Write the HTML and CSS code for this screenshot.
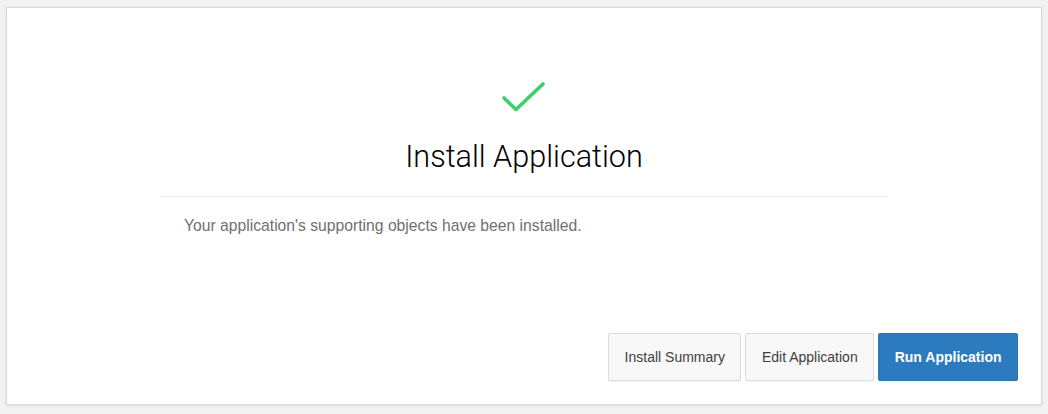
FILE: index.html
```html
<!DOCTYPE html>
<html lang="en">
<head>
<meta charset="utf-8">
<title>Install Application</title>
<link rel="stylesheet" href="styles.css">
</head>
<body>
<div class="dialog">
  <div class="content">
    <div class="head">
      <svg class="check" width="48" height="34" viewBox="0 0 48 34" aria-hidden="true">
        <polyline points="4,17 16,28.5 43,3" fill="none" stroke="#3dd06a" stroke-width="3.6" stroke-linecap="round" stroke-linejoin="round"/>
      </svg>
      <h1 class="title">Install Application</h1>
    </div>
    <p class="message">Your application's supporting objects have been installed.</p>
  </div>
  <div class="actions">
    <button class="btn">Install Summary</button>
    <button class="btn">Edit Application</button>
    <button class="btn btn-primary">Run Application</button>
  </div>
</div>
</body>
</html>
```

FILE: styles.css
```css
html, body {
  margin: 0;
  padding: 0;
}
body {
  background: #f2f2f2;
  padding: 7px 6px 9px 6px;
  font-family: "Liberation Sans", Arial, Helvetica, sans-serif;
  box-sizing: border-box;
  height: 414px;
}
.dialog {
  box-sizing: border-box;
  height: 398px;
  background: #fff;
  border: 1px solid #d9d9d9;
  box-shadow: 0 1px 3px rgba(0,0,0,0.08);
  display: flex;
  flex-direction: column;
  justify-content: space-between;
}
.content {
  width: 728px;
  margin: 0 auto;
}
.head {
  display: flex;
  flex-direction: column;
  align-items: center;
  padding-top: 73px;
  border-bottom: 1px solid #ececec;
  padding-bottom: 21px;
}
.check {
  display: block;
}
.title {
  margin: 24px 0 0 0;
  font-family: Roboto, "Liberation Sans", Arial, sans-serif;
  font-size: 30.6px;
  line-height: 36px;
  font-weight: 300;
  color: #000;
}
.message {
  margin: 19px 0 0 0;
  padding-left: 24px;
  font-size: 15.7px;
  line-height: 20px;
  color: #707070;
}
.actions {
  display: flex;
  justify-content: flex-end;
  gap: 4px;
  padding: 0 23px 23px 0;
}
.btn {
  height: 48px;
  padding: 0 15.5px;
  font-family: "Liberation Sans", Arial, Helvetica, sans-serif;
  font-size: 14px;
  color: #404040;
  background: #f8f8f8;
  border: 1px solid #dcdcdc;
  border-radius: 2px;
  box-shadow: 0 1px 1px rgba(0,0,0,0.04);
}
.btn-primary {
  background: #2d7bbf;
  border-color: #2a72b2;
  color: #fff;
  font-weight: bold;
}
```
